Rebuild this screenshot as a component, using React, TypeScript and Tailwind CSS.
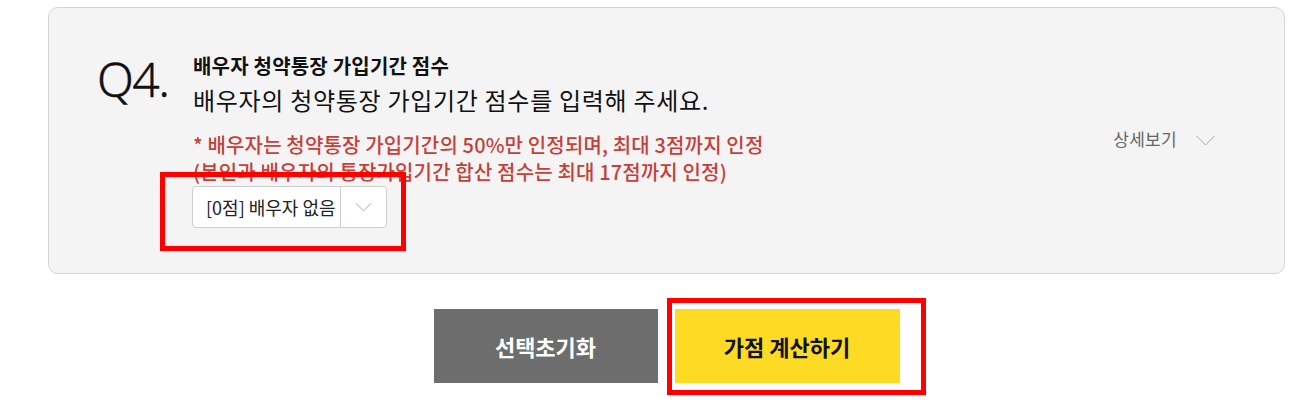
import React from "react";

const KR = { fontFamily: '"Noto Sans CJK KR", "Noto Sans", sans-serif' };

function Chevron({ className }: { className?: string }) {
  return (
    <svg className={className} viewBox="0 0 20 11" fill="none">
      <path d="M1 1 L10 10 L19 1" stroke="currentColor" strokeWidth="1" />
    </svg>
  );
}

export default function App() {
  return (
    <div className="w-[1299px] h-[400px] bg-white relative overflow-hidden" style={KR}>
      <div className="pt-[7px] pl-[48px] pr-[14px]">
        <div className="h-[267px] rounded-[10px] border border-[#d4d4d4] bg-[#f4f4f4] flex pl-[48px] pr-[68px] pt-[45px]">
          <div className="w-[96px] shrink-0 pt-[2px]">
            <div
              className="text-[48px] leading-[48px] font-light tracking-[-1.5px] text-[#111]"
              style={{ fontFamily: '"Noto Sans", sans-serif', WebkitTextStroke: "0.4px #111" }}
            >
              Q4.
            </div>
          </div>
          <div className="flex-1 flex justify-between">
            <div>
              <div className="text-[20px] leading-[26px] font-bold text-[#111] tracking-[0.2px]">
                배우자 청약통장 가입기간 점수
              </div>
              <div className="mt-[6px] text-[24px] leading-[30px] text-[#111] tracking-[0.7px]">
                배우자의 청약통장 가입기간 점수를 입력해 주세요.
              </div>
              <div className="mt-[16px] text-[20px] leading-[27px] font-medium text-[#c63f38] tracking-[0.15px]">
                <div>* 배우자는 청약통장 가입기간의 50%만 인정되며, 최대 3점까지 인정</div>
                <div>(본인과 배우자의 통장가입기간 합산 점수는 최대 17점까지 인정)</div>
              </div>
              <div className="mt-[1px] w-[195px] h-[42px] flex rounded-[4px] border border-[#cfcfcf] bg-white -ml-px">
                <div className="w-[148px] flex items-center pl-[13px] text-[18px] text-[#222] border-r border-[#cfcfcf] whitespace-nowrap">
                  [0점] 배우자 없음
                </div>
                <div className="flex-1 flex items-center justify-center text-[#999]">
                  <Chevron className="w-[17px] h-[10px]" />
                </div>
              </div>
            </div>
            <div className="pt-[74px] flex items-start gap-[18px]">
              <span className="text-[17px] leading-[24px] text-[#666] tracking-[0.3px]">상세보기</span>
              <Chevron className="w-[21px] h-[11px] mt-[8px] text-[#aaa]" />
            </div>
          </div>
        </div>
        <div className="mt-[35px] flex justify-center gap-[17px]">
          <button className="w-[224px] h-[74px] bg-[#6d6d6d] text-white text-[22px] font-bold">
            선택초기화
          </button>
          <button className="w-[225px] h-[74px] bg-[#fddb25] text-[#111] text-[22px] font-bold">
            가점 계산하기
          </button>
        </div>
      </div>
      <div className="absolute left-[160px] top-[172px] w-[246px] h-[79px] border-[5px] border-[#ff0000] pointer-events-none" />
      <div className="absolute left-[667px] top-[298px] w-[259px] h-[97px] border-[5px] border-[#ff0000] pointer-events-none" />
    </div>
  );
}
